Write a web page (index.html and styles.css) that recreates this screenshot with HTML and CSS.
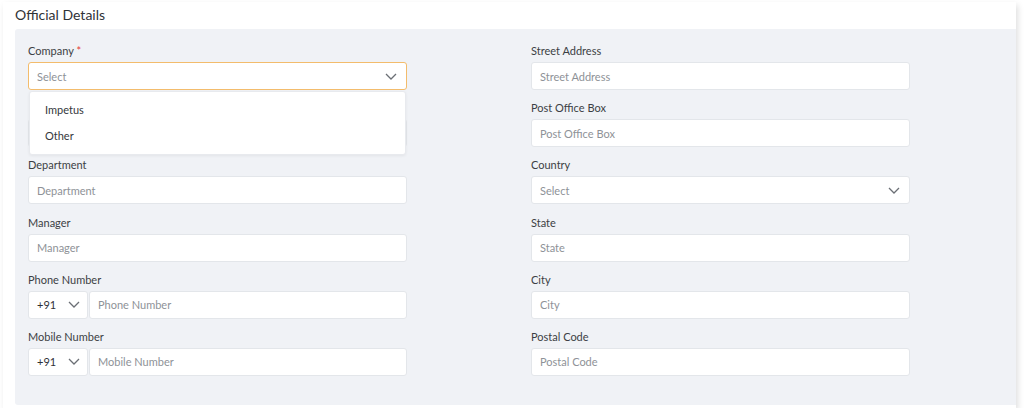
FILE: index.html
```html
<!DOCTYPE html>
<html lang="en">
<head>
  <meta charset="UTF-8" />
  <title>Official Details</title>
  <link rel="stylesheet" href="styles.css">
</head>
<body>
  <div class="card">
    <h2 class="card-title">Official Details</h2>
    <div class="panel">
      <div class="form-grid">
        <!-- left column -->
        <div class="column">
          <div class="field">
            <label class="field-label">Company <span class="req">*</span></label>
            <div class="select-wrap">
              <div class="input select focused">
                <span class="placeholder">Select</span>
                <svg class="chevron" width="12" height="7" viewBox="0 0 12 7"><path d="M1 1l5 5 5-5" fill="none" stroke="#6b6f75" stroke-width="1.3"/></svg>
              </div>
              <div class="dropdown">
                <div class="dropdown-item">Impetus</div>
                <div class="dropdown-item">Other</div>
              </div>
            </div>
          </div>
          <!-- row hidden under the open dropdown -->
          <div class="field">
            <label class="field-label"></label>
            <div class="input"></div>
          </div>
          <div class="field">
            <label class="field-label">Department</label>
            <div class="input"><span class="placeholder">Department</span></div>
          </div>
          <div class="field">
            <label class="field-label">Manager</label>
            <div class="input"><span class="placeholder">Manager</span></div>
          </div>
          <div class="field">
            <label class="field-label">Phone Number</label>
            <div class="phone-group">
              <div class="input code">
                <span>+91</span>
                <svg class="chevron" width="12" height="7" viewBox="0 0 12 7"><path d="M1 1l5 5 5-5" fill="none" stroke="#6b6f75" stroke-width="1.3"/></svg>
              </div>
              <div class="input grow"><span class="placeholder">Phone Number</span></div>
            </div>
          </div>
          <div class="field">
            <label class="field-label">Mobile Number</label>
            <div class="phone-group">
              <div class="input code">
                <span>+91</span>
                <svg class="chevron" width="12" height="7" viewBox="0 0 12 7"><path d="M1 1l5 5 5-5" fill="none" stroke="#6b6f75" stroke-width="1.3"/></svg>
              </div>
              <div class="input grow"><span class="placeholder">Mobile Number</span></div>
            </div>
          </div>
        </div>

        <!-- right column -->
        <div class="column">
          <div class="field">
            <label class="field-label">Street Address</label>
            <div class="input"><span class="placeholder">Street Address</span></div>
          </div>
          <div class="field">
            <label class="field-label">Post Office Box</label>
            <div class="input"><span class="placeholder">Post Office Box</span></div>
          </div>
          <div class="field">
            <label class="field-label">Country</label>
            <div class="input select">
              <span class="placeholder">Select</span>
              <svg class="chevron" width="12" height="7" viewBox="0 0 12 7"><path d="M1 1l5 5 5-5" fill="none" stroke="#6b6f75" stroke-width="1.3"/></svg>
            </div>
          </div>
          <div class="field">
            <label class="field-label">State</label>
            <div class="input"><span class="placeholder">State</span></div>
          </div>
          <div class="field">
            <label class="field-label">City</label>
            <div class="input"><span class="placeholder">City</span></div>
          </div>
          <div class="field">
            <label class="field-label">Postal Code</label>
            <div class="input"><span class="placeholder">Postal Code</span></div>
          </div>
        </div>
      </div>
    </div>
  </div>
</body>
</html>
```

FILE: styles.css
```css
body {
  margin: 0;
  background: #ffffff;
  font-family: Lato, "Open Sans", sans-serif;
  color: #3c3f44;
}

.card {
  margin: 2px 0 0 3px;
  width: 1013px;
  height: 406px;
  background: #ffffff;
  box-shadow: 2px 3px 6px rgba(0, 0, 0, 0.13);
  display: flex;
  flex-direction: column;
  box-sizing: border-box;
  padding: 4px 0 3px 12px;
}

.card-title {
  margin: 0;
  height: 23px;
  font-size: 14px;
  font-weight: 400;
  line-height: 18px;
  color: #2f3237;
}

.panel {
  flex: 1;
  background: #f0f2f6;
  border-radius: 3px 0 0 3px;
  padding: 14px 13px 0 13px;
}

.form-grid {
  display: grid;
  grid-template-columns: 379px 379px;
  column-gap: 124px;
}

.column {
  display: flex;
  flex-direction: column;
  gap: 10.2px;
}

.field {
  display: flex;
  flex-direction: column;
  gap: 4px;
}

.field-label {
  font-size: 11px;
  line-height: 14px;
  height: 14px;
  padding-top: 1px;
  color: #3c3f44;
}

.req {
  color: #e53935;
}

.input {
  height: 28px;
  box-sizing: border-box;
  background: #ffffff;
  border: 1px solid #e3e6ea;
  border-radius: 3px;
  display: flex;
  align-items: center;
  padding: 0 8px;
  font-size: 11px;
}

.placeholder {
  color: #8e9297;
}

.select {
  justify-content: space-between;
  padding-right: 9px;
}

.focused {
  border-color: #f3bc6c;
}

.select-wrap {
  position: relative;
}

.dropdown {
  position: absolute;
  top: 29px;
  left: 1px;
  right: 1px;
  height: 64px;
  box-sizing: border-box;
  background: #ffffff;
  border: 1px solid #e8eaee;
  border-radius: 3px;
  box-shadow: 0 1px 3px rgba(0, 0, 0, 0.06);
  padding-top: 5px;
  z-index: 2;
}

.dropdown-item {
  font-size: 11px;
  line-height: 26px;
  padding-left: 15px;
  color: #34373c;
}

.phone-group {
  display: flex;
  gap: 1px;
}

.code {
  width: 60px;
  flex-shrink: 0;
  justify-content: space-between;
  color: #2f3237;
  padding-right: 7px;
}

.grow {
  flex: 1;
}
```
